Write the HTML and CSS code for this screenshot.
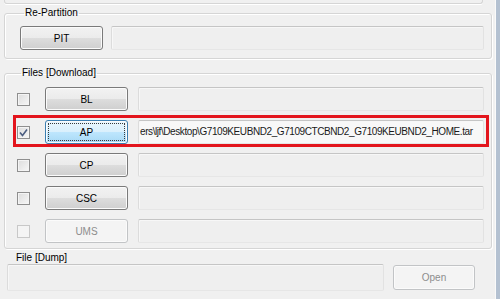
FILE: index.html
```html
<!DOCTYPE html>
<html>
<head>
    <meta charset="UTF-8">
    <title>Odin</title>
    <link rel="stylesheet" href="styles.css">
</head>
<body>
    <div class="window">
        <div class="prev"></div>

        <fieldset class="group part">
            <legend>Re-Partition</legend>
            <div class="row">
                <button class="btn">PIT</button>
                <div class="field wide"></div>
            </div>
        </fieldset>

        <fieldset class="group files">
            <legend>Files [Download]</legend>
            <div class="row">
                <span class="check"></span>
                <button class="btn">BL</button>
                <div class="field"></div>
            </div>
            <div class="row marked">
                <span class="check">
                    <svg width="11" height="11" viewBox="0 0 11 11"><path d="M2 5.5 L4.5 8.5 L9 2.5" fill="none" stroke="#4b5d80" stroke-width="1.6"/></svg>
                </span>
                <button class="btn hot">AP</button>
                <div class="field path">ers\ljf\Desktop\G7109KEUBND2_G7109CTCBND2_G7109KEUBND2_HOME.tar</div>
            </div>
            <div class="row">
                <span class="check"></span>
                <button class="btn">CP</button>
                <div class="field"></div>
            </div>
            <div class="row">
                <span class="check"></span>
                <button class="btn">CSC</button>
                <div class="field"></div>
            </div>
            <div class="row">
                <span class="check off"></span>
                <button class="btn off">UMS</button>
                <div class="field"></div>
            </div>
        </fieldset>

        <div class="dump-label">File [Dump]</div>
        <div class="dump">
            <div class="field dumpfield"></div>
            <button class="btn off open">Open</button>
        </div>
    </div>
</body>
</html>
```

FILE: styles.css
```css
body {
    margin: 0;
    background-color: #f0f0f0;
    font-family: "Liberation Sans", Arial, sans-serif;
    font-size: 10px;
    color: #000;
}

.window {
    width: 496px;
    height: 299px;
    overflow: hidden;
    border-right: 4px solid #b4c1d1;
    box-shadow: inset -1px 0 0 #fafafa;
}

.prev {
    height: 3px;
    margin: 0 13px 0 4px;
    border: 1px solid #d5d5d5;
    border-top: 0;
    border-radius: 0 0 3px 3px;
    box-shadow: 0 1px 0 #fff;
}

.group {
    box-sizing: border-box;
    width: 488px;
    margin: 0 0 0 4px;
    padding: 0;
    min-inline-size: 0;
    border: 1px solid #d5d5d5;
    border-radius: 3px;
    box-shadow: inset 1px 1px 0 #fff, 1px 1px 0 #fff;
}

.group legend {
    margin-left: 4px;
    padding: 0 1px;
    line-height: 12px;
}

.part {
    margin-top: 3px;
    padding: 7px 0 8px 15px;
}

.files {
    margin-top: 8px;
    padding: 8px 0 5px 12px;
    display: flex;
    flex-direction: column;
    gap: 9px;
}

.row {
    display: flex;
    align-items: center;
    height: 24px;
}

.part .row {
    gap: 8px;
}

.marked {
    position: relative;
}

.marked::after {
    content: "";
    position: absolute;
    top: -5px;
    bottom: -3px;
    left: -4px;
    right: 2px;
    border: 3px solid #e3151d;
}

.check {
    box-sizing: border-box;
    width: 13px;
    height: 13px;
    margin-right: 15px;
    border: 1px solid #8f8f8f;
    background: linear-gradient(135deg, #dcdcdc, #f7f7f7);
    box-shadow: inset 0 0 0 1px #f4f4f4;
    display: flex;
    align-items: center;
    justify-content: center;
}

.check.off {
    border-color: #c8c8c8;
    background: #f4f4f4;
}

.btn {
    box-sizing: border-box;
    width: 83px;
    height: 24px;
    padding: 0;
    font: inherit;
    color: #000;
    border: 1px solid #7a7a7a;
    border-radius: 3px;
    background: linear-gradient(#f2f2f2 0%, #ebebeb 50%, #dddddd 51%, #cfcfcf 100%);
    box-shadow: inset 0 0 0 1px #fbfbfb;
}

.btn.hot {
    position: relative;
    border-color: #3c7fb1;
    background: linear-gradient(#eaf6fd 0%, #d9f0fc 50%, #bee6fd 51%, #a7d9f5 100%);
}

.btn.hot::before {
    content: "";
    position: absolute;
    inset: 2px;
    border: 1px dotted #3a3a3a;
}

.btn.off {
    color: #8d8d8d;
    border-color: #c2c4c6;
    background: #f4f4f4;
}

.files .btn {
    margin-right: 10px;
}

.field {
    box-sizing: border-box;
    width: 346px;
    height: 24px;
    border: 1px solid;
    border-color: #c5c5c5 #e2e2e2 #e6e6e6 #dcdcdc;
    border-radius: 2px;
    background-color: #efefef;
    box-shadow: inset 1px 1px 0 #f7f7f7;
}

.field.wide {
    width: 373px;
}

.field.path {
    background-color: #f8f8f8;
    color: #1a1a1a;
    line-height: 22px;
    padding-left: 1px;
    white-space: nowrap;
    overflow: hidden;
    letter-spacing: -0.42px;
}

.dump-label {
    margin: 3px 0 0 16px;
    line-height: 12px;
}

.dump {
    display: flex;
    align-items: center;
    gap: 9px;
    margin-left: 7px;
}

.field.dumpfield {
    width: 377px;
    height: 27px;
}

.btn.open {
    width: 82px;
    height: 25px;
}
```
